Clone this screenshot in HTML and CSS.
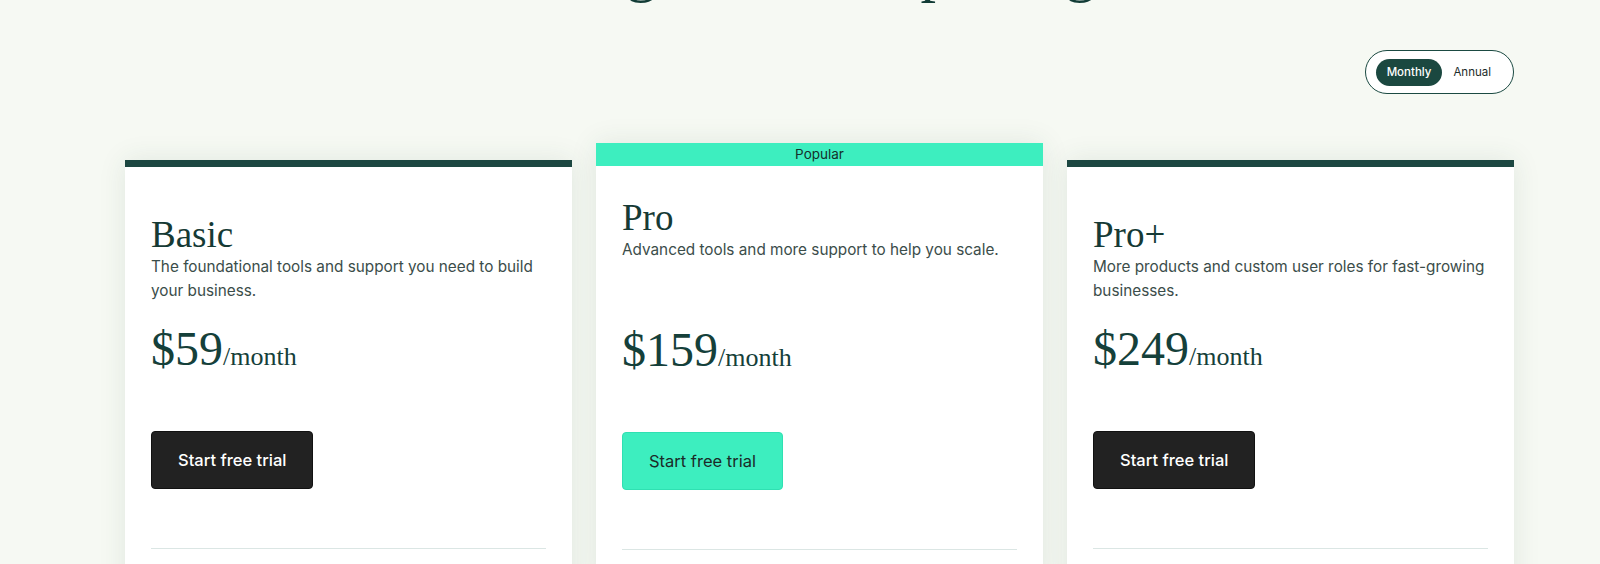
FILE: index.html
```html
<!DOCTYPE html>
<html lang="en">
<head>
<meta charset="utf-8">
<title>Pricing</title>
<link rel="stylesheet" href="styles.css">
</head>
<body>
<main class="page">
  <h1 class="page-title">Dream big. Realistic pricing too.</h1>

  <div class="toggle-row">
    <div class="toggle">
      <button class="toggle-btn is-active">Monthly</button>
      <button class="toggle-btn">Annual</button>
    </div>
  </div>

  <section class="plans">
    <article class="card card--plain">
      <div class="card-body">
        <div class="card-head">
          <h2 class="plan-name">Basic</h2>
          <p class="plan-desc">The foundational tools and support you need to build your business.</p>
        </div>
        <p class="price"><span class="amount">$59</span><span class="period">/month</span></p>
        <a class="cta cta--dark" href="#">Start free trial</a>
        <hr class="divider">
      </div>
    </article>

    <article class="card card--featured">
      <div class="badge">Popular</div>
      <div class="card-body">
        <div class="card-head">
          <h2 class="plan-name">Pro</h2>
          <p class="plan-desc">Advanced tools and more support to help you scale.</p>
        </div>
        <p class="price"><span class="amount">$159</span><span class="period">/month</span></p>
        <a class="cta cta--accent" href="#">Start free trial</a>
        <hr class="divider">
      </div>
    </article>

    <article class="card card--plain">
      <div class="card-body">
        <div class="card-head">
          <h2 class="plan-name">Pro+</h2>
          <p class="plan-desc">More products and custom user roles for fast-growing businesses.</p>
        </div>
        <p class="price"><span class="amount">$249</span><span class="period">/month</span></p>
        <a class="cta cta--dark" href="#">Start free trial</a>
        <hr class="divider">
      </div>
    </article>
  </section>
</main>
</body>
</html>
```

FILE: styles.css
```css
* {
  box-sizing: border-box;
}

html, body {
  margin: 0;
  padding: 0;
}

body {
  background: #f6f9f3;
  font-family: "Inter", "Noto Sans", sans-serif;
  color: #1c3b37;
  overflow: hidden;
}

.page {
  padding: 0 86px 0 125px;
}

.page-title {
  margin: -66px -86px 0 -125px;
  font-family: "Liberation Serif", serif;
  font-weight: 400;
  font-size: 62px;
  line-height: 70px;
  text-align: center;
  color: #123c36;
}

.toggle-row {
  display: flex;
  justify-content: flex-end;
  margin-top: 46px;
}

.toggle {
  display: flex;
  align-items: center;
  height: 44px;
  padding: 0 11px 0 10px;
  border: 1px solid #1b4a42;
  border-radius: 22px;
  background: #ffffff;
}

.toggle-btn {
  height: 27px;
  padding: 0 11px;
  border: 0;
  border-radius: 14px;
  background: transparent;
  font-family: "Inter", "Noto Sans", sans-serif;
  font-size: 11.5px;
  color: #1c2b29;
  cursor: pointer;
}

.toggle-btn.is-active {
  background: #1b4840;
  color: #ffffff;
  font-weight: 500;
}

.plans {
  display: grid;
  grid-template-columns: repeat(3, 1fr);
  column-gap: 24px;
  align-items: start;
  margin-top: 49px;
}

.card {
  background: #ffffff;
  box-shadow: 0 0 26px rgba(40, 80, 55, 0.10);
  min-height: 440px;
}

.card--plain {
  margin-top: 17px;
  border-top: 7px solid #1c4741;
}

.badge {
  height: 23px;
  background: #3deebf;
  color: #15302b;
  font-size: 13.5px;
  line-height: 23px;
  text-align: center;
}

.card-body {
  padding: 48px 26px 0;
}

.card--featured .card-body {
  padding-top: 32px;
}

.card-head {
  min-height: 88px;
}

.card--featured .card-head {
  min-height: 106px;
}

.plan-name {
  margin: 0;
  font-family: "Liberation Serif", serif;
  font-weight: 400;
  font-size: 37px;
  line-height: 40px;
  color: #163a35;
}

.plan-desc {
  margin: 0;
  font-size: 15.3px;
  line-height: 24px;
  color: #3b4d4a;
}

.price {
  margin: 18px 0 0;
  line-height: 56px;
  font-family: "Liberation Serif", serif;
  color: #15403a;
}

.amount {
  font-size: 48px;
}

.period {
  font-size: 26px;
}

.cta {
  display: inline-flex;
  align-items: center;
  justify-content: center;
  height: 58px;
  margin-top: 43px;
  padding: 0 26px;
  border-radius: 4px;
  font-size: 16.5px;
  text-decoration: none;
}

.cta--dark {
  background: #222222;
  border: 1px solid #111111;
  color: #ffffff;
  font-weight: 500;
}

.cta--accent {
  background: #3deebf;
  border: 1px solid #2fe0b2;
  color: #1b2b28;
  font-weight: 400;
}

.divider {
  margin: 59px 0 0;
  border: 0;
  border-top: 1px solid #dbe6e4;
}
```
